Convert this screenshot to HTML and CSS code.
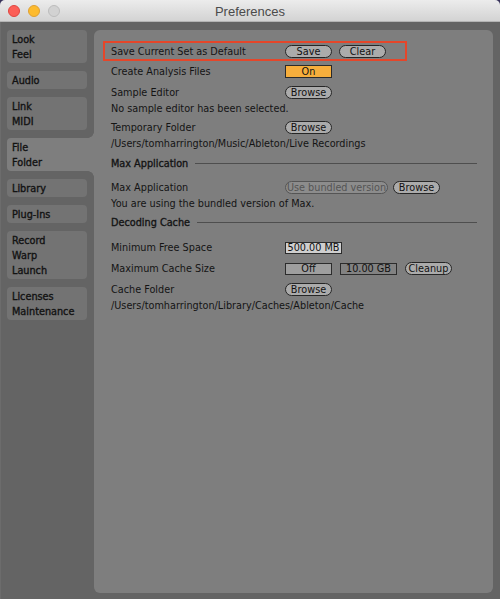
FILE: index.html
```html
<!DOCTYPE html>
<html>
<head>
<meta charset="utf-8">
<title>Preferences</title>
<link rel="stylesheet" href="styles.css">
</head>
<body>
<div class="window">
  <div class="titlebar">
    <div class="lights">
      <span class="light red"></span>
      <span class="light yellow"></span>
      <span class="light gray"></span>
    </div>
    <div class="title">Preferences</div>
    <div class="spacer"></div>
  </div>
  <div class="body">
    <nav class="tabs">
      <div class="tab">Look<br>Feel</div>
      <div class="tab">Audio</div>
      <div class="tab">Link<br>MIDI</div>
      <div class="tab active">File<br>Folder</div>
      <div class="tab">Library</div>
      <div class="tab">Plug-Ins</div>
      <div class="tab">Record<br>Warp<br>Launch</div>
      <div class="tab">Licenses<br>Maintenance</div>
    </nav>
    <main class="panel">
      <div class="row highlight">
        <span class="label">Save Current Set as Default</span>
        <div class="controls gap7">
          <span class="btn">Save</span>
          <span class="btn">Clear</span>
        </div>
      </div>
      <div class="row">
        <span class="label">Create Analysis Files</span>
        <div class="controls"><span class="toggle">On</span></div>
      </div>
      <div class="row">
        <span class="label">Sample Editor</span>
        <div class="controls"><span class="btn">Browse</span></div>
      </div>
      <div class="desc">No sample editor has been selected.</div>
      <div class="row after-desc">
        <span class="label">Temporary Folder</span>
        <div class="controls"><span class="btn">Browse</span></div>
      </div>
      <div class="desc">/Users/tomharrington/Music/Ableton/Live Recordings</div>

      <div class="section first">
        <span class="section-title">Max Application</span>
        <span class="rule"></span>
      </div>
      <div class="row after-section">
        <span class="label">Max Application</span>
        <div class="controls gap5">
          <span class="btn disabled wide">Use bundled version</span>
          <span class="btn">Browse</span>
        </div>
      </div>
      <div class="desc">You are using the bundled version of Max.</div>

      <div class="section">
        <span class="section-title">Decoding Cache</span>
        <span class="rule"></span>
      </div>
      <div class="row after-section2">
        <span class="label">Minimum Free Space</span>
        <div class="controls"><span class="numbox bright">500.00 MB</span></div>
      </div>
      <div class="row">
        <span class="label">Maximum Cache Size</span>
        <div class="controls gap8">
          <span class="numbox off">Off</span>
          <span class="numbox plain">10.00 GB</span>
          <span class="btn">Cleanup</span>
        </div>
      </div>
      <div class="row">
        <span class="label">Cache Folder</span>
        <div class="controls"><span class="btn">Browse</span></div>
      </div>
      <div class="desc">/Users/tomharrington/Library/Caches/Ableton/Cache</div>
    </main>
  </div>
</div>
</body>
</html>
```

FILE: styles.css
```css
html, body {
  margin: 0;
  padding: 0;
  background: #37325a;
}

.window {
  width: 500px;
  height: 599px;
  display: flex;
  flex-direction: column;
  border-radius: 5px 5px 0 0;
  overflow: hidden;
  font-family: "DejaVu Sans", Verdana, sans-serif;
}

.titlebar {
  height: 22px;
  flex: none;
  display: flex;
  align-items: center;
  background: linear-gradient(#ececec, #d3d3d3);
  border-bottom: 1px solid #b4b4b4;
  box-sizing: border-box;
}

.lights {
  width: 70px;
  display: flex;
  gap: 8px;
  padding-left: 8px;
  box-sizing: border-box;
  padding-top: 1px;
}

.light {
  width: 12px;
  height: 12px;
  border-radius: 50%;
  box-sizing: border-box;
}

.light.red { background: #fc5f57; border: 1px solid #de4640; }
.light.yellow { background: #fdbb2e; border: 1px solid #dea033; }
.light.gray { background: #d2d2d2; border: 1px solid #bcbcbc; }

.title {
  flex: 1;
  text-align: center;
  font-family: "Liberation Sans", Arial, sans-serif;
  font-size: 13px;
  color: #4b4b4b;
  padding-top: 1px;
}

.spacer { width: 70px; }

.body {
  flex: 1;
  display: flex;
  background: #646464;
  padding: 8px 7px 6px 7px;
  border-left: 1px solid #6c6c6c;
  box-sizing: border-box;
}

.tabs {
  width: 87px;
  flex: none;
  display: flex;
  flex-direction: column;
  gap: 8px;
  margin-left: -1px;
}

.tab {
  width: 80px;
  box-sizing: border-box;
  background: #737373;
  border-radius: 4px;
  padding: 2px 0 1px 5px;
  font-size: 9.7px;
  line-height: 15px;
  color: #121212;
  -webkit-text-stroke: 0.35px #121212;
}

.tab.active {
  width: 87px;
  background: #7e7e7e;
  border-radius: 4px 0 0 4px;
  position: relative;
}

.tab.active::before,
.tab.active::after {
  content: "";
  position: absolute;
  right: 0;
  width: 6px;
  height: 6px;
}

.tab.active::before {
  top: -6px;
  background: radial-gradient(circle at 0 0, transparent 5.5px, #7e7e7e 6px);
}

.tab.active::after {
  bottom: -6px;
  background: radial-gradient(circle at 0 100%, transparent 5.5px, #7e7e7e 6px);
}

.panel {
  flex: 1;
  background: #7e7e7e;
  border-radius: 6px;
  padding: 11px 16px 0 17px;
  font-size: 9.7px;
  color: #141414;
}

.row {
  height: 21px;
  display: flex;
  align-items: center;
}

.row.highlight {
  height: 20px;
  width: 304px;
  box-sizing: border-box;
  margin-left: -8px;
  padding-left: 6px;
  border: 2px solid #e5462a;
}

.row.after-desc { margin-top: 3px; }
.row.after-section { margin-top: 4px; }
.row.after-section2 { margin-top: 5px; }

.label {
  width: 174px;
  flex: none;
}

.controls {
  display: flex;
  align-items: center;
}

.gap5 { gap: 5px; }
.gap7 { gap: 7px; }
.gap8 { gap: 8px; }

.desc {
  height: 11px;
  line-height: 11px;
  white-space: nowrap;
}

.section {
  height: 20px;
  display: flex;
  align-items: center;
  gap: 7px;
  margin-top: 3px;
}

.section.first { margin-top: 4px; }

.section-title {
  -webkit-text-stroke: 0.35px #141414;
}

.rule {
  flex: 1;
  height: 1px;
  background: #4e4e4e;
}

.btn {
  width: 47px;
  height: 13px;
  box-sizing: border-box;
  border: 1px solid #262626;
  border-radius: 7px;
  background: #ababab;
  text-align: center;
  line-height: 11px;
  font-size: 9.7px;
  color: #111;
}

.btn.wide {
  width: 103px;
}

.btn.disabled {
  background: #8c8c8c;
  border-color: #555;
  color: #545454;
}

.toggle {
  width: 47px;
  height: 13px;
  box-sizing: border-box;
  border: 1px solid #2a2a2a;
  background: #f6ae3c;
  text-align: center;
  line-height: 11px;
  color: #111;
}

.numbox {
  height: 12px;
  box-sizing: border-box;
  border: 1px solid #2c2c2c;
  text-align: center;
  line-height: 10px;
  color: #111;
}

.numbox.bright { width: 57px; background: #cfcfcf; }
.numbox.off { width: 47px; background: #9e9e9e; }
.numbox.plain { width: 57px; background: #828282; }
```
